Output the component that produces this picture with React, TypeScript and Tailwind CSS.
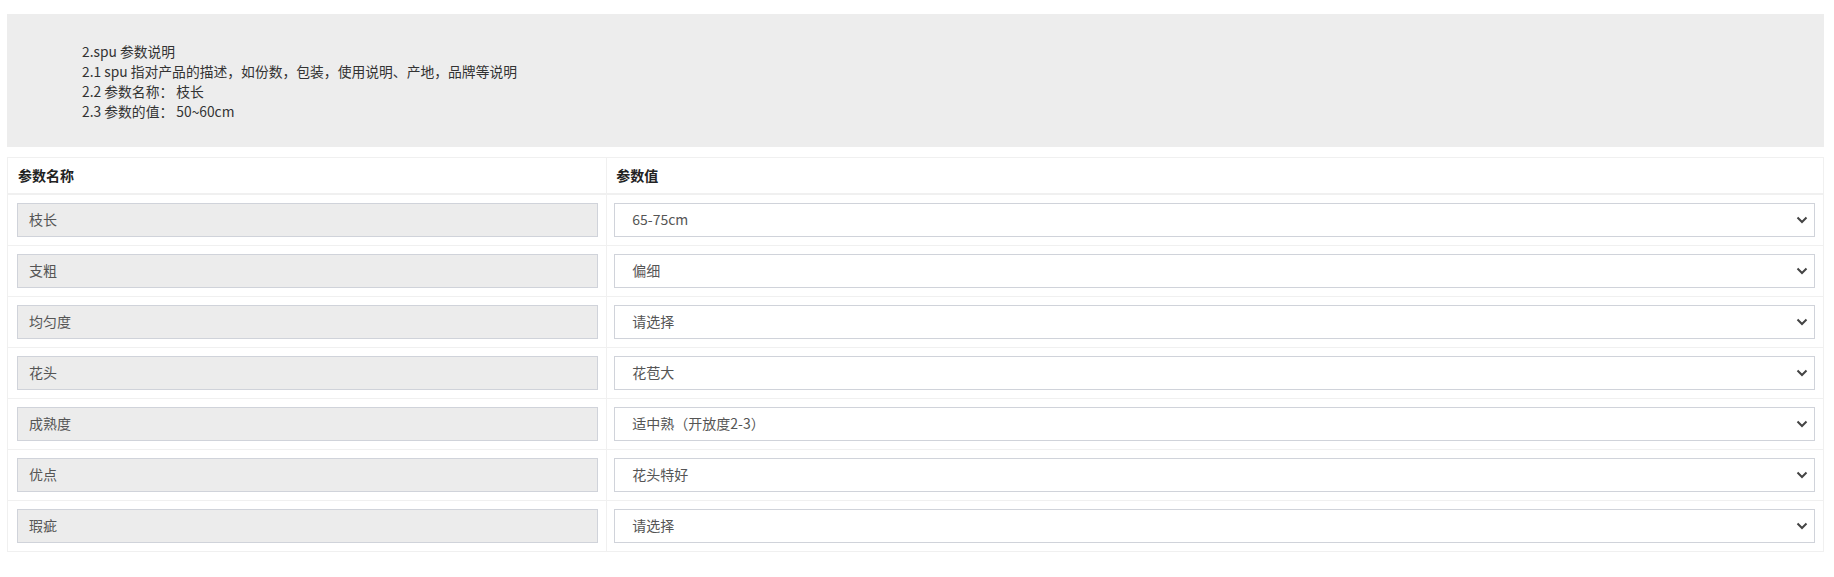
import React from 'react';

const rows: [string, string][] = [
  ['枝长', '65-75cm'],
  ['支粗', '偏细'],
  ['均匀度', '请选择'],
  ['花头', '花苞大'],
  ['成熟度', '适中熟（开放度2-3）'],
  ['优点', '花头特好'],
  ['瑕疵', '请选择'],
];

const notes = [
  '2.spu 参数说明',
  '2.1 spu 指对产品的描述，如份数，包装，使用说明、产地，品牌等说明',
  '2.2 参数名称： 枝长',
  '2.3 参数的值： 50~60cm',
];

function Chevron() {
  return (
    <svg width="12" height="8" viewBox="0 0 12 8" className="shrink-0">
      <path d="M1.5 1.5 6 6l4.5-4.5" fill="none" stroke="#444" strokeWidth="2" />
    </svg>
  );
}

export default function App() {
  return (
    <div className="min-h-[577px] bg-white pl-[7px] pr-[10px] pt-[14px] font-['Noto_Sans_CJK_SC',sans-serif] text-[14px] text-[#333]">
      {/* 说明 */}
      <div className="bg-[#ededed] pl-[75px] pt-[27px] pb-[26px] leading-[20px] text-[13.8px]">
        {notes.map((t) => (
          <p key={t}>{t}</p>
        ))}
      </div>

      {/* 参数表 */}
      <table className="mt-[10px] w-full border-collapse border border-[#f0f0f0]">
        <thead>
          <tr className="h-[36px] border-b-2 border-[#f0f0f0]">
            <th className="w-[33%] border-r border-[#f0f0f0] pl-[10px] text-left text-[14px] font-bold text-[#222]">参数名称</th>
            <th className="pl-[9px] text-left text-[14px] font-bold text-[#222]">参数值</th>
          </tr>
        </thead>
        <tbody>
          {rows.map(([name, value]) => (
            <tr key={name} className="border-b border-[#f0f0f0]">
              <td className="border-r border-[#f0f0f0] pl-[9px] pr-[8px] pt-[8px] pb-[8px]">
                <div className="flex h-[34px] items-center border border-[#d0d3da] bg-[#ececec] pl-[11px] text-[14px] text-[#555]">
                  {name}
                </div>
              </td>
              <td className="pl-[7px] pr-[8px] pt-[8px] pb-[8px]">
                <div className="flex h-[34px] items-center justify-between border border-[#d0d3da] bg-white pl-[17px] pr-[6px] text-[14px] text-[#555]">
                  <span>{value}</span>
                  <Chevron />
                </div>
              </td>
            </tr>
          ))}
        </tbody>
      </table>
    </div>
  );
}
